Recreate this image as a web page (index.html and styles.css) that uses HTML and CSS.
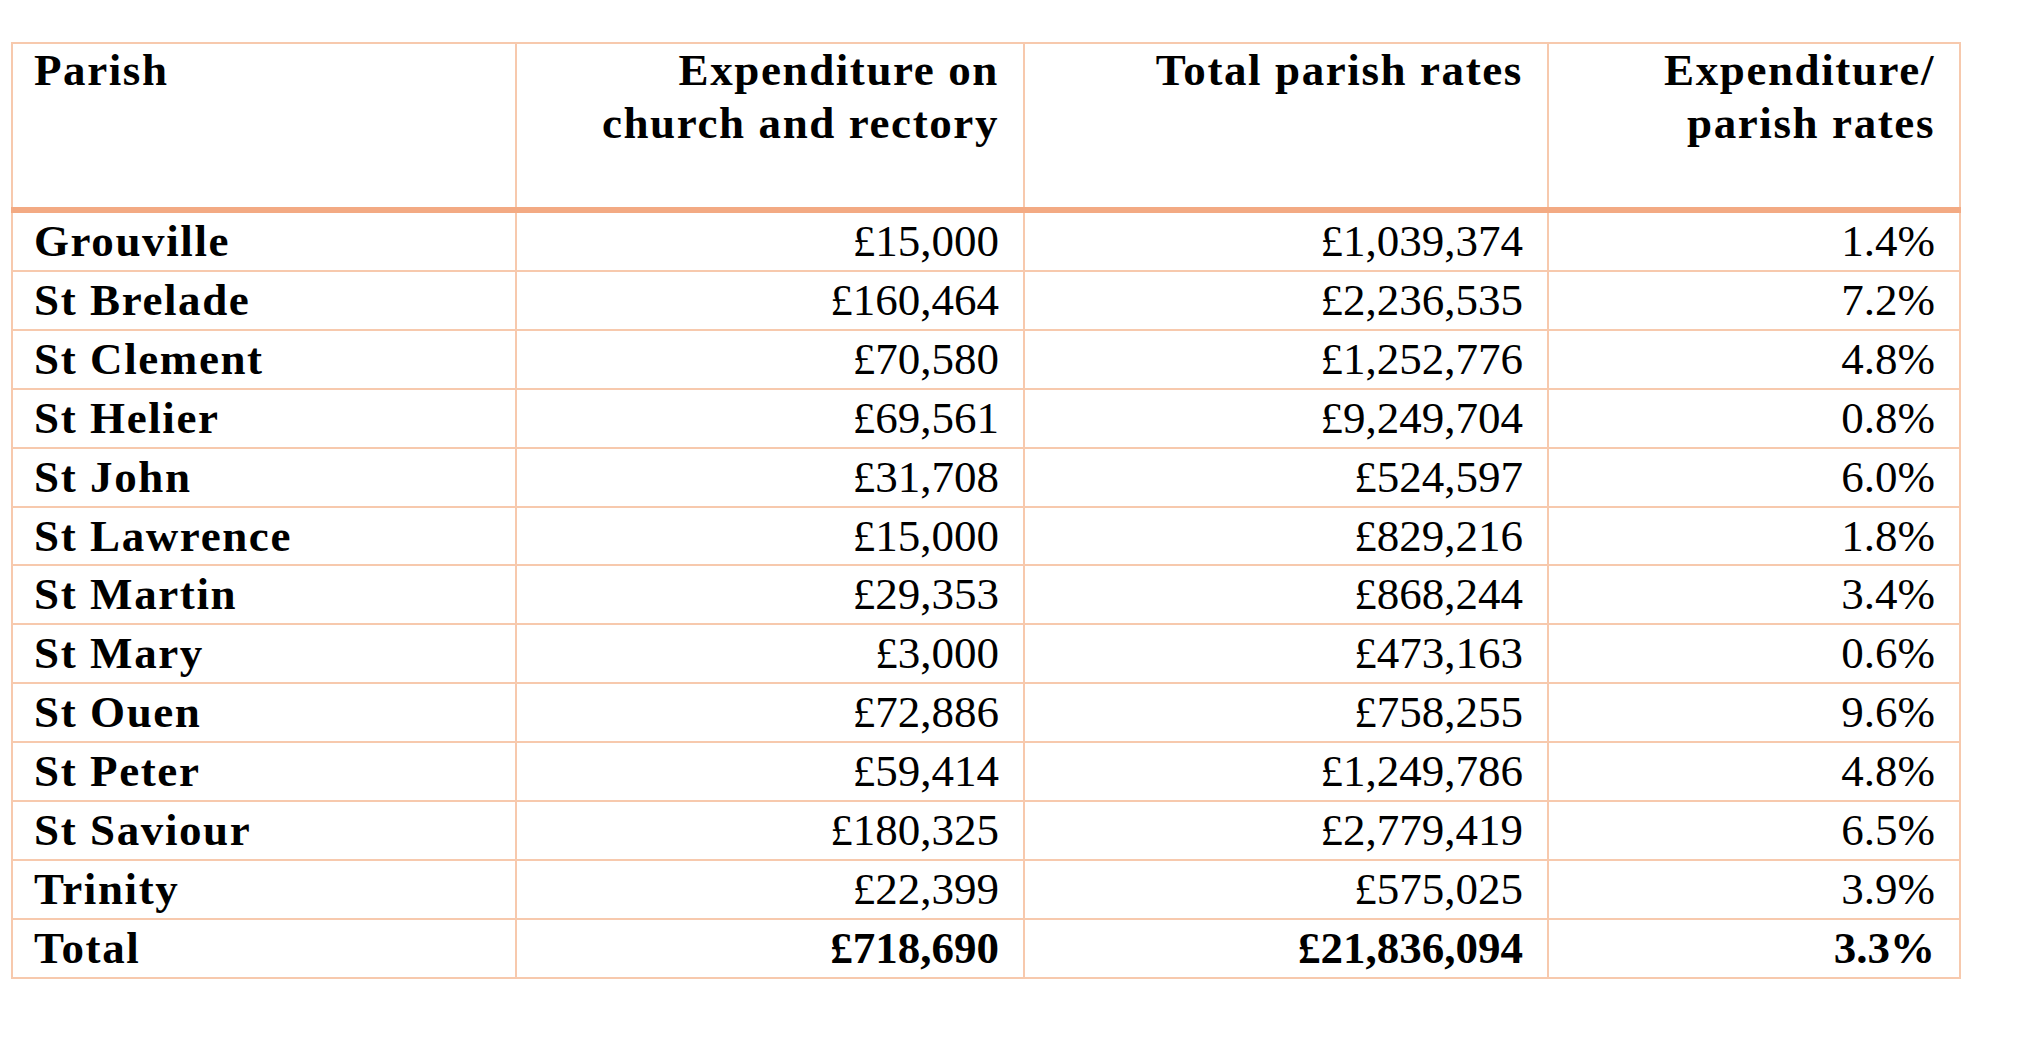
FILE: index.html
```html
<!DOCTYPE html>
<html lang="en">
<head>
<meta charset="utf-8">
<title>Parish expenditure</title>
<link rel="stylesheet" href="styles.css">
</head>
<body>
<table class="rates">
  <colgroup>
    <col class="c1">
    <col class="c2">
    <col class="c3">
    <col class="c4">
  </colgroup>
  <thead>
    <tr>
      <th class="name">Parish</th>
      <th class="num">Expenditure on<br>church and rectory</th>
      <th class="num">Total parish rates</th>
      <th class="num">Expenditure/<br>parish rates</th>
    </tr>
  </thead>
  <tbody>
    <tr><td class="name">Grouville</td><td class="num">£15,000</td><td class="num">£1,039,374</td><td class="num">1.4%</td></tr>
    <tr><td class="name">St Brelade</td><td class="num">£160,464</td><td class="num">£2,236,535</td><td class="num">7.2%</td></tr>
    <tr><td class="name">St Clement</td><td class="num">£70,580</td><td class="num">£1,252,776</td><td class="num">4.8%</td></tr>
    <tr><td class="name">St Helier</td><td class="num">£69,561</td><td class="num">£9,249,704</td><td class="num">0.8%</td></tr>
    <tr><td class="name">St John</td><td class="num">£31,708</td><td class="num">£524,597</td><td class="num">6.0%</td></tr>
    <tr><td class="name">St Lawrence</td><td class="num">£15,000</td><td class="num">£829,216</td><td class="num">1.8%</td></tr>
    <tr><td class="name">St Martin</td><td class="num">£29,353</td><td class="num">£868,244</td><td class="num">3.4%</td></tr>
    <tr><td class="name">St Mary</td><td class="num">£3,000</td><td class="num">£473,163</td><td class="num">0.6%</td></tr>
    <tr><td class="name">St Ouen</td><td class="num">£72,886</td><td class="num">£758,255</td><td class="num">9.6%</td></tr>
    <tr><td class="name">St Peter</td><td class="num">£59,414</td><td class="num">£1,249,786</td><td class="num">4.8%</td></tr>
    <tr><td class="name">St Saviour</td><td class="num">£180,325</td><td class="num">£2,779,419</td><td class="num">6.5%</td></tr>
    <tr><td class="name">Trinity</td><td class="num">£22,399</td><td class="num">£575,025</td><td class="num">3.9%</td></tr>
    <tr class="total"><td class="name">Total</td><td class="num">£718,690</td><td class="num">£21,836,094</td><td class="num">3.3%</td></tr>
  </tbody>
</table>
</body>
</html>
```
FILE: styles.css
```css
html, body {
  margin: 0;
  padding: 0;
  background: #ffffff;
}

body {
  font-family: "Liberation Serif", "Times New Roman", serif;
  font-size: 45px;
  color: #000000;
}

.rates {
  border-collapse: collapse;
  table-layout: fixed;
  width: 1950px;
  margin: 42px 0 0 11px;
}

.c1 { width: 504px; }
.c2 { width: 508px; }
.c3 { width: 524px; }
.c4 { width: 412px; }

.rates th,
.rates td {
  border: 2px solid #f7c9ad;
  padding: 0 24px 0 21px;
  white-space: nowrap;
}

.rates th {
  font-weight: bold;
  letter-spacing: 1.6px;
  line-height: 53px;
  vertical-align: top;
  height: 163px;
  padding-top: 0;
  border-bottom: 6px solid #f3aa83;
}

.rates td {
  font-weight: normal;
  line-height: 56.9px;
  vertical-align: top;
}

.rates .name {
  text-align: left;
  font-weight: bold;
  letter-spacing: 1.6px;
}

.rates .num {
  text-align: right;
}

.rates th.num {
  letter-spacing: 1.6px;
}

.rates .total td {
  font-weight: bold;
}
```
